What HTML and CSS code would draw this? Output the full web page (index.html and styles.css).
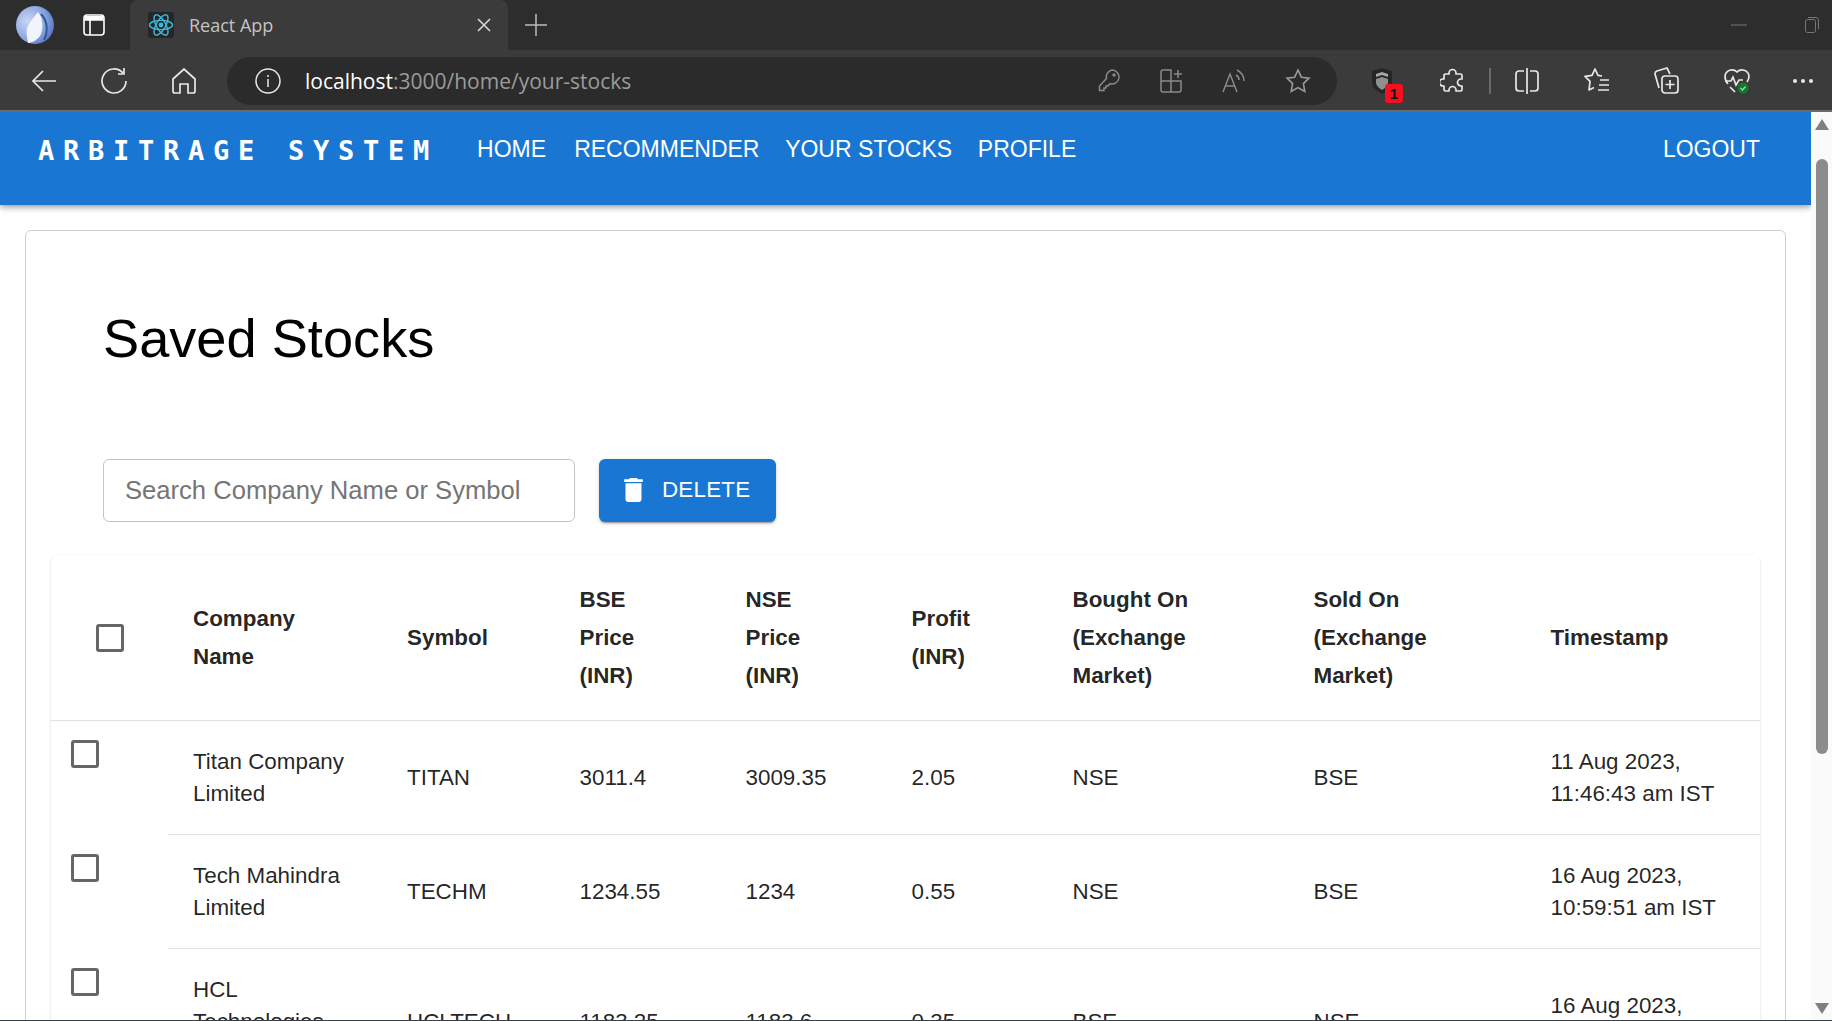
FILE: index.html
```html
<!doctype html>
<html>
<head>
<meta charset="utf-8">
<title>React App</title>
<link rel="stylesheet" href="styles.css">
</head>
<body>
<div class="shell">

  <div class="tabstrip">
    <svg class="avatar" width="38" height="38" viewBox="0 0 38 38">
      <defs>
        <radialGradient id="av" cx="0.3" cy="0.4" r="0.8">
          <stop offset="0" stop-color="#c9d6f2"/>
          <stop offset="0.6" stop-color="#8aa4e0"/>
          <stop offset="1" stop-color="#4a68b8"/>
        </radialGradient>
      </defs>
      <circle cx="19" cy="19" r="19" fill="url(#av)"/>
      <path d="M22 6C27 12 28 23 24 30C20 35 15 37 12 37C11 30 9 24 13 18C15 14 19 10 22 6Z" fill="#f1f4fb"/>
      <path d="M25 8C32 15 32 26 28 34" fill="none" stroke="#2c5a98" stroke-width="2"/>
    </svg>
    <div class="strip-btn">
      <svg width="22" height="22" viewBox="0 0 22 22" fill="none" stroke="#fff" stroke-width="1.6"><rect x="1" y="1" width="20" height="20" rx="3"/><path d="M1 6h20M7 6v15"/><path d="M2 2h18v4H2z" fill="#fff" stroke="none"/></svg>
    </div>
    <div class="tab">
      <span class="favicon">
        <svg width="26" height="26" viewBox="0 0 26 26" fill="none" stroke="#3fb6d3" stroke-width="1.4"><ellipse cx="13" cy="13" rx="11.500" ry="4.600"/><ellipse cx="13" cy="13" rx="11.500" ry="4.600" transform="rotate(60 13 13)"/><ellipse cx="13" cy="13" rx="11.500" ry="4.600" transform="rotate(120 13 13)"/><circle cx="13" cy="13" r="2.400" fill="#3fb6d3" stroke="none"/></svg>
      </span>
      <span class="tab-title">React App</span>
      <svg class="tab-close" width="14" height="14" viewBox="0 0 14 14" stroke="#d8d8d8" stroke-width="1.6"><path d="M1 1l12 12M13 1L1 13"/></svg>
    </div>
    <div class="strip-btn plus">
      <svg width="22" height="22" viewBox="0 0 22 22" stroke="#bdbdbd" stroke-width="1.5"><path d="M11 0v22M0 11h22"/></svg>
    </div>
    <div class="spacer"></div>
    <svg class="win-min" width="16" height="2" viewBox="0 0 16 2"><path d="M0 1h16" stroke="#777" stroke-width="1"/></svg>
    <svg class="win-max" width="14" height="16" viewBox="0 0 14 16" fill="none" stroke="#777" stroke-width="1"><rect x="0.5" y="2.500" width="10" height="13" rx="2"/><path d="M3 0.500h8a2.500 2.500 0 0 1 2.500 2.500v9"/></svg>
  </div>

  <div class="toolbar">
    <div class="tool">
      <svg width="26" height="24" viewBox="0 0 26 24" fill="none" stroke="#e8e8e8" stroke-width="1.7"><path d="M25 12H2M12 2L2 12l10 10"/></svg>
    </div>
    <div class="tool">
      <svg width="26" height="26" viewBox="0 0 26 26" fill="none" stroke="#e8e8e8" stroke-width="1.7"><path d="M22 5a12 12 0 1 0 3 8"/><path d="M23 0v6h-6"/></svg>
    </div>
    <div class="tool">
      <svg width="24" height="26" viewBox="0 0 24 26" fill="none" stroke="#e8e8e8" stroke-width="1.7"><path d="M1 11L12 1l11 10v12a2 2 0 0 1-2 2h-5v-9H8v9H3a2 2 0 0 1-2-2z"/></svg>
    </div>
    <div class="address">
      <span class="info">
        <svg width="26" height="26" viewBox="0 0 26 26" fill="none" stroke="#e8e8e8" stroke-width="1.5"><circle cx="13" cy="13" r="12"/><path d="M13 11v8M13 7v2"/></svg>
      </span>
      <span class="url"><b>localhost</b>:3000/home/your-stocks</span>
      <span class="addr-tool">
        <svg width="22" height="24" viewBox="0 0 22 24" fill="none" stroke="#8a8a8a" stroke-width="1.5"><path d="M14 1a7 7 0 1 1-2 13.700L10 17H8v2H6v2.500H1.500V17l7-7.500A7 7 0 0 1 14 1z"/><circle cx="16" cy="6" r="1"/></svg>
      </span>
      <span class="addr-tool">
        <svg width="24" height="24" viewBox="0 0 24 24" fill="none" stroke="#8a8a8a" stroke-width="1.5"><path d="M11 12V1H3a2 2 0 0 0-2 2v9zM1 12h10v11H3a2 2 0 0 1-2-2zM11 12h10v9a2 2 0 0 1-2 2h-8z"/><path d="M18 1v8M14 5h8"/></svg>
      </span>
      <span class="addr-tool">
        <svg width="26" height="24" viewBox="0 0 26 24" fill="none" stroke="#8a8a8a" stroke-width="1.5"><path d="M1 23L8 5l7 18M3.500 17h9"/><path d="M14 6c2 1 3 3 3 5M15 1c4 2 7 6 7 11"/></svg>
      </span>
      <span class="addr-tool">
        <svg width="26" height="26" viewBox="0 0 26 26" fill="none" stroke="#9a9a9a" stroke-width="1.6"><path d="M13 2l3.400 7.200 7.600 1-5.600 5.400 1.400 7.800L13 19.600l-6.800 3.800 1.400-7.800L2 10.200l7.600-1z"/></svg>
      </span>
    </div>
    <div class="tool">
      <svg width="20" height="26" viewBox="0 0 20 26"><path d="M10 0l10 3v11c0 6-5 9-10 12C5 23 0 20 0 14V3z" fill="#262626"/><path d="M10 4l6 2v3l-6-2-6 2V6z" fill="#a6a6a6"/><path d="M10 9l6 2v3c0 4-3 6-6 8-3-2-6-4-6-8v-3z" fill="#8f8f8f"/></svg>
      <span class="badge">1</span>
    </div>
    <div class="tool">
      <svg width="24" height="26" viewBox="0 0 24 26" fill="none" stroke="#e8e8e8" stroke-width="1.7" stroke-linejoin="round"><path d="M9 5a3.500 3.500 0 0 1 7 0v1h4.500a1.500 1.500 0 0 1 1.500 1.500V11h-1a3.500 3.500 0 0 0 0 7h1v3.500a1.500 1.500 0 0 1-1.500 1.500H16v-1a3.500 3.500 0 0 0-7 0v1H5.500A1.500 1.500 0 0 1 4 21.500V18H3a3.500 3.500 0 0 1 0-7h1V7.500A1.500 1.500 0 0 1 5.500 6H9z"/></svg>
    </div>
    <span class="divider"></span>
    <div class="tool">
      <svg width="24" height="26" viewBox="0 0 24 26" fill="none" stroke="#e8e8e8" stroke-width="1.7"><path d="M12 0v26M9 3H4a3 3 0 0 0-3 3v14a3 3 0 0 0 3 3h5M15 3h5a3 3 0 0 1 3 3v14a3 3 0 0 1-3 3h-5"/></svg>
    </div>
    <div class="tool">
      <svg width="26" height="26" viewBox="0 0 26 26" fill="none" stroke="#e8e8e8" stroke-width="1.7" stroke-linejoin="round"><path d="M18 8l-4-.6L11 1 8 7.400 1 8.400l5 5L5 22l5-2.600"/><path d="M16 12h9M15 17h10M14 22h11"/></svg>
    </div>
    <div class="tool">
      <svg width="26" height="28" viewBox="0 0 26 28" fill="none" stroke="#e8e8e8" stroke-width="1.7"><path d="M5 21L1 7a3 3 0 0 1 2-3l10-3 3 6"/><rect x="8" y="9" width="16" height="17" rx="3"/><path d="M16 13v9M11.500 17.500h9"/></svg>
    </div>
    <div class="tool">
      <svg width="26" height="28" viewBox="0 0 26 28" fill="none" stroke="#e8e8e8" stroke-width="1.7"><path d="M4 17C2 15 1 12 1 9a7 7 0 0 1 12-4 7 7 0 0 1 12 4c0 2-.5 4-2 6"/><path d="M1 14h6l2-4 3 8 3-5h4"/><path d="M6 20l5 5"/><circle cx="19" cy="21" r="5.500" fill="#137a2c" stroke="none"/><path d="M16.500 21l2 2 3-3.500" stroke="#9fd8a8" stroke-width="1.2"/></svg>
    </div>
    <div class="tool more">
      <svg width="20" height="4" viewBox="0 0 20 4" fill="#e8e8e8"><circle cx="2" cy="2" r="2"/><circle cx="10" cy="2" r="2"/><circle cx="18" cy="2" r="2"/></svg>
    </div>
  </div>

  <div class="viewport">
    <div class="page">
      <header class="appbar">
        <span class="logo">ARBITRAGE SYSTEM</span>
        <nav class="nav">
          <a href="#">Home</a>
          <a href="#">Recommender</a>
          <a href="#">Your Stocks</a>
          <a href="#">Profile</a>
        </nav>
        <a class="logout" href="#">Logout</a>
      </header>

      <main class="card">
        <h1 class="title">Saved Stocks</h1>
        <div class="actions">
          <input class="search" type="text" placeholder="Search Company Name or Symbol">
          <button class="delete">
            <svg width="19" height="24" viewBox="5 3 14 18" fill="#fff"><path d="M6 19c0 1.100.9 2 2 2h8c1.100 0 2-.9 2-2V7H6v12zM19 4h-3.500l-1-1h-5l-1 1H5v2h14V4z"/></svg>
            Delete
          </button>
        </div>

        <div class="table-wrap">
          <table class="stocks">
            <colgroup>
              <col class="c-check"><col class="c-name"><col class="c-sym"><col class="c-bse"><col class="c-nse"><col class="c-profit"><col class="c-bought"><col class="c-sold"><col class="c-time">
            </colgroup>
            <thead>
              <tr>
                <th class="head-check"><span class="box"></span></th>
                <th>Company<br>Name</th>
                <th>Symbol</th>
                <th>BSE<br>Price<br>(INR)</th>
                <th>NSE<br>Price<br>(INR)</th>
                <th>Profit<br>(INR)</th>
                <th>Bought On<br>(Exchange<br>Market)</th>
                <th>Sold On<br>(Exchange<br>Market)</th>
                <th>Timestamp</th>
              </tr>
            </thead>
            <tbody>
              <tr>
                <td class="row-check"><span class="box"></span></td>
                <td>Titan Company<br>Limited</td>
                <td>TITAN</td>
                <td>3011.4</td>
                <td>3009.35</td>
                <td>2.05</td>
                <td>NSE</td>
                <td>BSE</td>
                <td>11 Aug 2023,<br>11:46:43 am IST</td>
              </tr>
              <tr>
                <td class="row-check"><span class="box"></span></td>
                <td>Tech Mahindra<br>Limited</td>
                <td>TECHM</td>
                <td>1234.55</td>
                <td>1234</td>
                <td>0.55</td>
                <td>NSE</td>
                <td>BSE</td>
                <td>16 Aug 2023,<br>10:59:51 am IST</td>
              </tr>
              <tr>
                <td class="row-check"><span class="box"></span></td>
                <td>HCL<br>Technologies<br>Limited</td>
                <td>HCLTECH</td>
                <td>1183.25</td>
                <td>1183.6</td>
                <td>0.35</td>
                <td>BSE</td>
                <td>NSE</td>
                <td>16 Aug 2023,<br>11:02:17 am IST</td>
              </tr>
            </tbody>
          </table>
        </div>
      </main>
    </div>

    <div class="scrollbar">
      <span class="arrow-up"></span>
      <span class="thumb"></span>
      <span class="spacer"></span>
      <span class="arrow-down"></span>
    </div>
  </div>
</div>
</body>
</html>
```

FILE: styles.css
```css
html, body {
  margin: 0;
  padding: 0;
  background: #fff;
}

.shell {
  display: flex;
  flex-direction: column;
  width: 1832px;
  height: 1021px;
  overflow: hidden;
  box-sizing: border-box;
  border-bottom: 1px solid #3a3f47;
  font-family: "Liberation Sans", Arial, sans-serif;
}

.spacer {
  flex: 1;
}

/* browser chrome */
.tabstrip {
  display: flex;
  flex: 0 0 50px;
  align-items: center;
  background: #2d2d2d;
  padding-left: 16px;
  box-sizing: border-box;
}

.avatar {
  flex: 0 0 auto;
  margin-top: 0;
}

.strip-btn {
  display: flex;
  width: 76px;
  height: 50px;
  padding-left: 4px;
  box-sizing: border-box;
  align-items: center;
  justify-content: center;
  flex: 0 0 auto;
}

.tab {
  display: flex;
  align-items: center;
  width: 378px;
  height: 50px;
  padding: 0 17px 0 18px;
  box-sizing: border-box;
  background: #3b3b3b;
  border-radius: 8px 8px 0 0;
  color: #c4c4c4;
  font-family: "Open Sans", sans-serif;
  font-size: 18px;
}

.favicon {
  display: flex;
  width: 26px;
  height: 26px;
  background: #262626;
  border-radius: 3px;
}

.tab-title {
  flex: 1;
  margin-left: 15px;
}

.plus {
  width: 56px;
  padding-left: 0;
}

.win-min {
  margin-right: 58px;
}

.win-max {
  margin-right: 13px;
}

.toolbar {
  display: flex;
  flex: 0 0 62px;
  align-items: center;
  box-sizing: border-box;
  padding-left: 9px;
  padding-top: 2px;
  background: #3b3b3b;
  border-bottom: 2px solid #6b6b6b;
}

.tool {
  position: relative;
  display: flex;
  flex: 0 0 70px;
  height: 48px;
  align-items: center;
  justify-content: center;
}

.tool.more {
  flex: 0 0 58px;
  margin-left: 2px;
}

.address {
  display: flex;
  flex: 0 0 1110px;
  align-items: center;
  height: 48px;
  margin: 0 10px 0 8px;
  padding-right: 8px;
  box-sizing: border-box;
  background: #2b2b2b;
  border-radius: 24px;
}

.info {
  display: flex;
  margin-left: 28px;
}

.url {
  flex: 1;
  margin-left: 24px;
  color: #9b9b9b;
  font-family: "Open Sans", sans-serif;
  font-size: 21px;
}

.url b {
  color: #fff;
  font-weight: 400;
}

.addr-tool {
  display: flex;
  flex: 0 0 63px;
  align-items: center;
  justify-content: center;
}

.badge {
  position: absolute;
  left: 38px;
  top: 27px;
  width: 18px;
  height: 19px;
  background: #f5101f;
  border-radius: 3px;
  color: #111;
  font-size: 15px;
  font-weight: bold;
  line-height: 20px;
  text-align: center;
}

.divider {
  flex: 0 0 2px;
  height: 26px;
  margin: 0 1px 0 2px;
  background: #6a6a6a;
}

/* page */
.viewport {
  display: flex;
  flex: 1;
  min-height: 0;
}

.page {
  flex: 1;
  min-width: 0;
  overflow: hidden;
}

.appbar {
  position: relative;
  display: flex;
  align-items: center;
  height: 93px;
  box-sizing: border-box;
  padding: 0 51px 19px 38px;
  background: #1976d2;
  box-shadow: 0 2px 4px -1px rgba(0,0,0,.2), 0 4px 5px 0 rgba(0,0,0,.14), 0 1px 10px 0 rgba(0,0,0,.12);
}

.logo {
  margin-top: 2px;
  color: #fff;
  font-family: "DejaVu Sans Mono", monospace;
  font-size: 27px;
  font-weight: bold;
  letter-spacing: 8.75px;
  white-space: nowrap;
}

.nav {
  display: flex;
  flex: 1;
  gap: 25.7px;
  margin-left: 39px;
}

.nav a:first-child {
  margin-right: 2.4px;
}

.nav a, .logout {
  color: #fff;
  font-size: 23px;
  text-decoration: none;
  text-transform: uppercase;
}

.card {
  margin: 25px 25px 0 25px;
  padding: 0 25px;
  border: 1px solid #cfcfcf;
  border-radius: 6px;
}

.title {
  margin: 0;
  padding: 75px 0 0 52px;
  color: #000;
  font-size: 54.2px;
  font-weight: 400;
  line-height: 64px;
}

.actions {
  display: flex;
  gap: 24px;
  margin: 89px 0 33px 52px;
}

.search {
  width: 472px;
  height: 63px;
  padding: 0 21px;
  box-sizing: border-box;
  border: 1px solid #c4c4c4;
  border-radius: 6px;
  font-family: "Liberation Sans", Arial, sans-serif;
  font-size: 25.6px;
  outline: none;
}

.search::placeholder {
  color: #757575;
  opacity: 1;
}

.delete {
  display: flex;
  align-items: center;
  gap: 19px;
  width: 177px;
  height: 63px;
  padding: 0 0 2px 25px;
  box-sizing: border-box;
  border: 0;
  border-radius: 6px;
  background: #1976d2;
  box-shadow: 0 3px 1px -2px rgba(0,0,0,.2), 0 2px 2px 0 rgba(0,0,0,.14), 0 1px 5px 0 rgba(0,0,0,.12);
  color: #fff;
  font-family: "Liberation Sans", Arial, sans-serif;
  font-size: 22.4px;
  letter-spacing: 0.2px;
  text-transform: uppercase;
}

.table-wrap {
  border-radius: 6px;
  box-shadow: 0 2px 1px -1px rgba(0,0,0,.2), 0 1px 1px 0 rgba(0,0,0,.14), 0 1px 3px 0 rgba(0,0,0,.12);
}

.stocks {
  width: 100%;
  table-layout: fixed;
  border-collapse: collapse;
  color: rgba(0,0,0,.87);
  font-size: 22.4px;
}

.c-check { width: 117px; }
.c-name { width: 214px; }
.c-sym { width: 172.5px; }
.c-bse { width: 166px; }
.c-nse { width: 166px; }
.c-profit { width: 161px; }
.c-bought { width: 241px; }
.c-sold { width: 237px; }

.stocks th {
  padding: 26px 25px 25px;
  border-bottom: 1px solid #e0e0e0;
  font-weight: bold;
  line-height: 38px;
  text-align: left;
}

.stocks td {
  padding: 25px;
  border-bottom: 1px solid #e0e0e0;
  line-height: 31.5px;
}

.stocks td.row-check {
  padding: 19px 0 0 20px;
  border-bottom: 0;
  vertical-align: top;
}

.stocks th.head-check {
  padding: 1px 0 0 45px;
}

.box {
  display: block;
  width: 28px;
  height: 28px;
  box-sizing: border-box;
  border: 3.5px solid #666;
  border-radius: 3px;
}

.scrollbar {
  display: flex;
  flex: 0 0 21px;
  flex-direction: column;
  align-items: center;
  background: #fafafa;
}

.arrow-up {
  margin-top: 7px;
  border: 7px solid transparent;
  border-top: 0;
  border-bottom: 11px solid #7f7f7f;
}

.thumb {
  width: 12px;
  height: 595px;
  margin-top: 29px;
  background: #8c8c8c;
  border-radius: 6px;
}

.arrow-down {
  margin-bottom: 6px;
  border: 7px solid transparent;
  border-bottom: 0;
  border-top: 11px solid #7f7f7f;
}
```
